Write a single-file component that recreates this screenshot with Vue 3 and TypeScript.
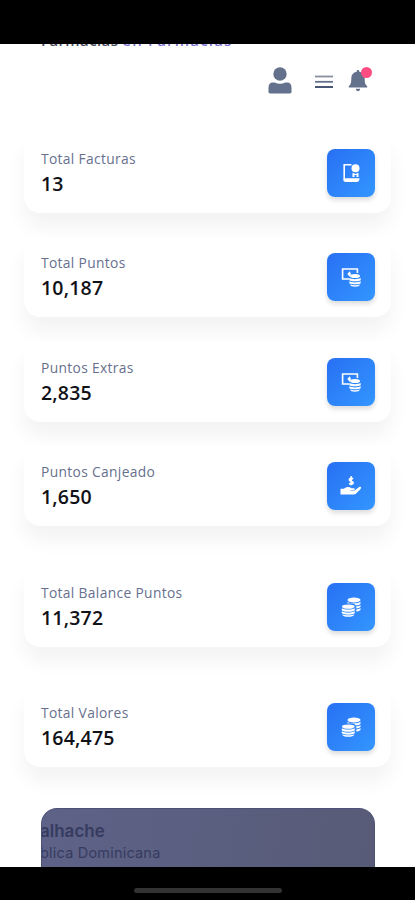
<script setup lang="ts">
type IconName = 'invoice' | 'money' | 'hand' | 'coins'

interface Stat {
  label: string
  value: string
  icon: IconName
  spaced?: boolean
}

const stats: Stat[] = [
  { label: 'Total Facturas', value: '13', icon: 'invoice' },
  { label: 'Total Puntos', value: '10,187', icon: 'money' },
  { label: 'Puntos Extras', value: '2,835', icon: 'money' },
  { label: 'Puntos Canjeado', value: '1,650', icon: 'hand' },
  { label: 'Total Balance Puntos', value: '11,372', icon: 'coins', spaced: true },
  { label: 'Total Valores', value: '164,475', icon: 'coins', spaced: true },
]
</script>

<template>
  <div class="screen">
    <div class="status-bar"></div>
    <main class="page">
      <div class="crumb"><strong>Farmacias</strong> <span>en Farmacias</span></div>
      <header class="toolbar">
        <svg class="user" viewBox="0 0 24 27">
          <circle cx="12" cy="7" r="6.7" />
          <path d="M.5 24.800v-4.100c0-3.500 1.500-5.200 4.500-5.200h1.700c3.300 1.600 7.300 1.600 10.600 0H19c3 0 4.500 1.700 4.500 5.200v4.100c0 1.200-.6 1.700-1.700 1.700H2.200c-1.100 0-1.700-.5-1.700-1.700z" />
        </svg>
        <svg class="menu" viewBox="0 0 18 14">
          <path class="line-light" d="M0 1.500h18" />
          <path class="line-mid" d="M0 6.800h18" />
          <path class="line-dark" d="M0 12h18" />
        </svg>
        <div class="bell-wrap">
          <svg class="bell" viewBox="0 0 20 23">
            <path d="M10 0c1 0 1.400.7 1.400 1.800 3.600.7 5.600 3.200 5.600 6.700 0 4.800.7 6.800 2.600 8.300v1.500H.4v-1.500C2.300 15.300 3 13.300 3 8.500c0-3.500 2-6 5.600-6.700C8.600.7 9 0 10 0zM7.800 19.600h4.400c0 1.600-.9 2.600-2.200 2.600s-2.200-1-2.200-2.600z" />
          </svg>
          <i class="badge"></i>
        </div>
      </header>

      <section class="stats">
        <article v-for="stat in stats" :key="stat.label" class="card" :class="{ spaced: stat.spaced }">
          <div class="copy">
            <p class="label">{{ stat.label }}</p>
            <p class="value">{{ stat.value }}</p>
          </div>
          <div class="tile">
            <svg v-if="stat.icon === 'invoice'" viewBox="0 0 20 20">
              <path class="stroke" d="M10.500 1.800H3.200v15" />
              <path d="M4.500 15.300h14c0 2.600-1 3.700-3 3.700H5c-2 0-2.600-.6-2.600-2.400z" />
              <circle cx="14.500" cy="5.200" r="4" />
              <path d="M11.500 9.800l3 1.200 3-1.200v4.200h-2v-2h-2v2h-2z" />
            </svg>
            <svg v-else-if="stat.icon === 'money'" viewBox="0 0 20 20">
              <path class="stroke" d="M8.200 12H1.600V2h14.800v4" />
              <path d="M9 4L6.300 7 9 10V8.300h.7V5.500H9z" />
              <ellipse cx="14" cy="9" rx="5" ry="2.100" />
              <path d="M8.300 11.100c2.500 1.500 8.900 1.500 11.400 0v2.100c-2.500 1.500-8.900 1.500-11.400 0zM8.300 14.300c2.500 1.500 8.900 1.500 11.400 0v1.900c-2.500 1.500-8.900 1.500-11.400 0zM9.100 17.400c2.600 1 7.200 1 9.800 0-.3 3-9.500 3-9.800 0z" />
            </svg>
            <svg v-else-if="stat.icon === 'hand'" class="hand" viewBox="0 0 22 20">
              <path d="M.5 12.800h3.300c3-2.300 5.300-2.100 7.700-.5h2.300c1.400 0 1.400 1.800 0 1.800h-3.500v.5h4.300l4.300-3.300c1.800-1.200 3.100.3 1.700 1.600l-4.500 4.700c-.7.700-1.300.9-2.300.9H.5z" />
              <path class="dollar" d="M13 3c-1-1-3.600-.9-3.600.8 0 1.900 3.700 1 3.700 2.900 0 1.700-2.700 1.900-3.900.7M11.200.3v9" />
            </svg>
            <svg v-else viewBox="0 0 20 20">
              <ellipse cx="13" cy="2.900" rx="6.500" ry="2.500" />
              <path d="M6.500 4.700c2.800 2 10.200 2 13 0v2.100c-1 1.200-3 1.500-4.700 1.600-.5-1.500-4-2.500-8.300-2zM15.300 9.300c2-.1 3.400-.7 4.200-1.400v2.200c-.8.900-2.300 1.300-4.200 1.500zM15.300 12.500c2-.1 3.400-.7 4.200-1.400v1.800c-.8.900-2.300 1.500-4.200 1.600z" />
              <ellipse cx="7.300" cy="9.600" rx="6.500" ry="2.200" />
              <path d="M.8 11.200c2.800 1.800 10.200 1.800 13 0v2.300c-2.800 1.700-10.200 1.700-13 0zM.8 14.300c2.800 1.800 10.200 1.800 13 0v2c-2.800 1.800-10.200 1.800-13 0zM1.200 17.200c3 1.400 9.200 1.400 12.200 0-.3 3.500-11.900 3.500-12.200 0z" />
            </svg>
          </div>
        </article>
      </section>

      <section class="profile">
        <div class="profile-text">
          <p class="name">alhache</p>
          <p class="country">blica Dominicana</p>
        </div>
      </section>
    </main>
    <footer class="home-bar"><div class="handle"></div></footer>
  </div>
</template>

<style>
body {
  background: #fff;
}
</style>

<style scoped>
.screen {
  display: flex;
  flex-direction: column;
  width: 100%;
  height: 900px;
  overflow: hidden;
  background: #fff;
  font-family: "Open Sans", "Noto Sans", sans-serif;
}
.status-bar {
  flex: 0 0 44px;
  background: #000;
}
.page {
  flex: 1 1 0;
  min-height: 0;
  overflow: hidden;
}
p {
  margin: 0;
}
.crumb {
  height: 20px;
  margin: -14px 0 0 41px;
  font-size: 15px;
  line-height: 20px;
  font-weight: 600;
  color: #4a4c60;
  white-space: nowrap;
}
.crumb strong {
  font-weight: 600;
  letter-spacing: 0.400px;
}
.crumb span {
  color: #7a72d4;
  letter-spacing: 1.200px;
}
.toolbar {
  display: flex;
  align-items: flex-start;
  height: 66px;
  margin-top: 17px;
  padding-left: 268px;
}
.toolbar svg {
  display: block;
  fill: #64718d;
}
.user {
  width: 24px;
  height: 27px;
}
.menu {
  width: 18px;
  height: 14px;
  margin: 8px 0 0 23px;
}
.menu path {
  stroke-width: 1.800;
}
.line-light {
  stroke: #8b90a0;
}
.line-mid {
  stroke: #64718d;
}
.line-dark {
  stroke: #344467;
}
.bell-wrap {
  position: relative;
  margin: 3px 0 0 15px;
}
.bell {
  width: 20px;
  height: 22px;
}
.badge {
  position: absolute;
  top: -3px;
  left: 13px;
  width: 11px;
  height: 11px;
  border-radius: 50%;
  background: #ff4c83;
}
.stats {
  display: flex;
  flex-direction: column;
  gap: 24.400px;
  padding: 0 24px;
}
.card {
  display: flex;
  box-sizing: border-box;
  height: 80px;
  justify-content: space-between;
  padding: 16px 16px 16px 17px;
  border-radius: 16px;
  background: #fff;
  box-shadow: 0 14px 20px rgba(0, 0, 0, 0.05);
}
.spaced {
  margin-top: 16px;
}
.copy {
  height: 48px;
}
.label {
  height: 20px;
  font-size: 13.800px;
  line-height: 20px;
  letter-spacing: 0.340px;
  color: #67708e;
  white-space: nowrap;
}
.value {
  height: 28px;
  font-size: 19.500px;
  line-height: 29px;
  letter-spacing: 0.200px;
  font-weight: 600;
  color: #111217;
}
.tile {
  display: grid;
  place-items: center;
  width: 48px;
  height: 48px;
  border-radius: 8px;
  background: linear-gradient(135deg, #2870f3, #3396ff);
  box-shadow: 0 3px 5px rgba(0, 0, 0, 0.14);
}
.tile svg {
  width: 20px;
  height: 20px;
  fill: #fff;
}
.tile .hand {
  width: 22px;
}
.tile .stroke {
  fill: none;
  stroke: #fff;
  stroke-width: 1.600;
}
.tile .dollar {
  fill: none;
  stroke: #fff;
  stroke-width: 1.800;
}
.profile {
  height: 100px;
  margin: 41px 40px 0 41px;
  box-sizing: border-box;
  overflow: hidden;
  border: 1px solid #4c5176;
  border-bottom: 0;
  border-radius: 16px;
  background: linear-gradient(100deg, #5e6288, #575b76);
  color: #363b60;
}
.profile-text {
  margin: 11px 0 0 -2px;
  font-family: Inter, sans-serif;
  white-space: nowrap;
}
.name {
  font-size: 17px;
  line-height: 23px;
  font-weight: 600;
}
.country {
  font-size: 14.500px;
  line-height: 20px;
  letter-spacing: 0.200px;
}
.home-bar {
  display: flex;
  flex: 0 0 33px;
  justify-content: center;
  align-items: center;
  box-sizing: border-box;
  padding-top: 13px;
  background: #000;
}
.handle {
  width: 148px;
  height: 5px;
  border-radius: 3px;
  background: #333;
}
</style>
